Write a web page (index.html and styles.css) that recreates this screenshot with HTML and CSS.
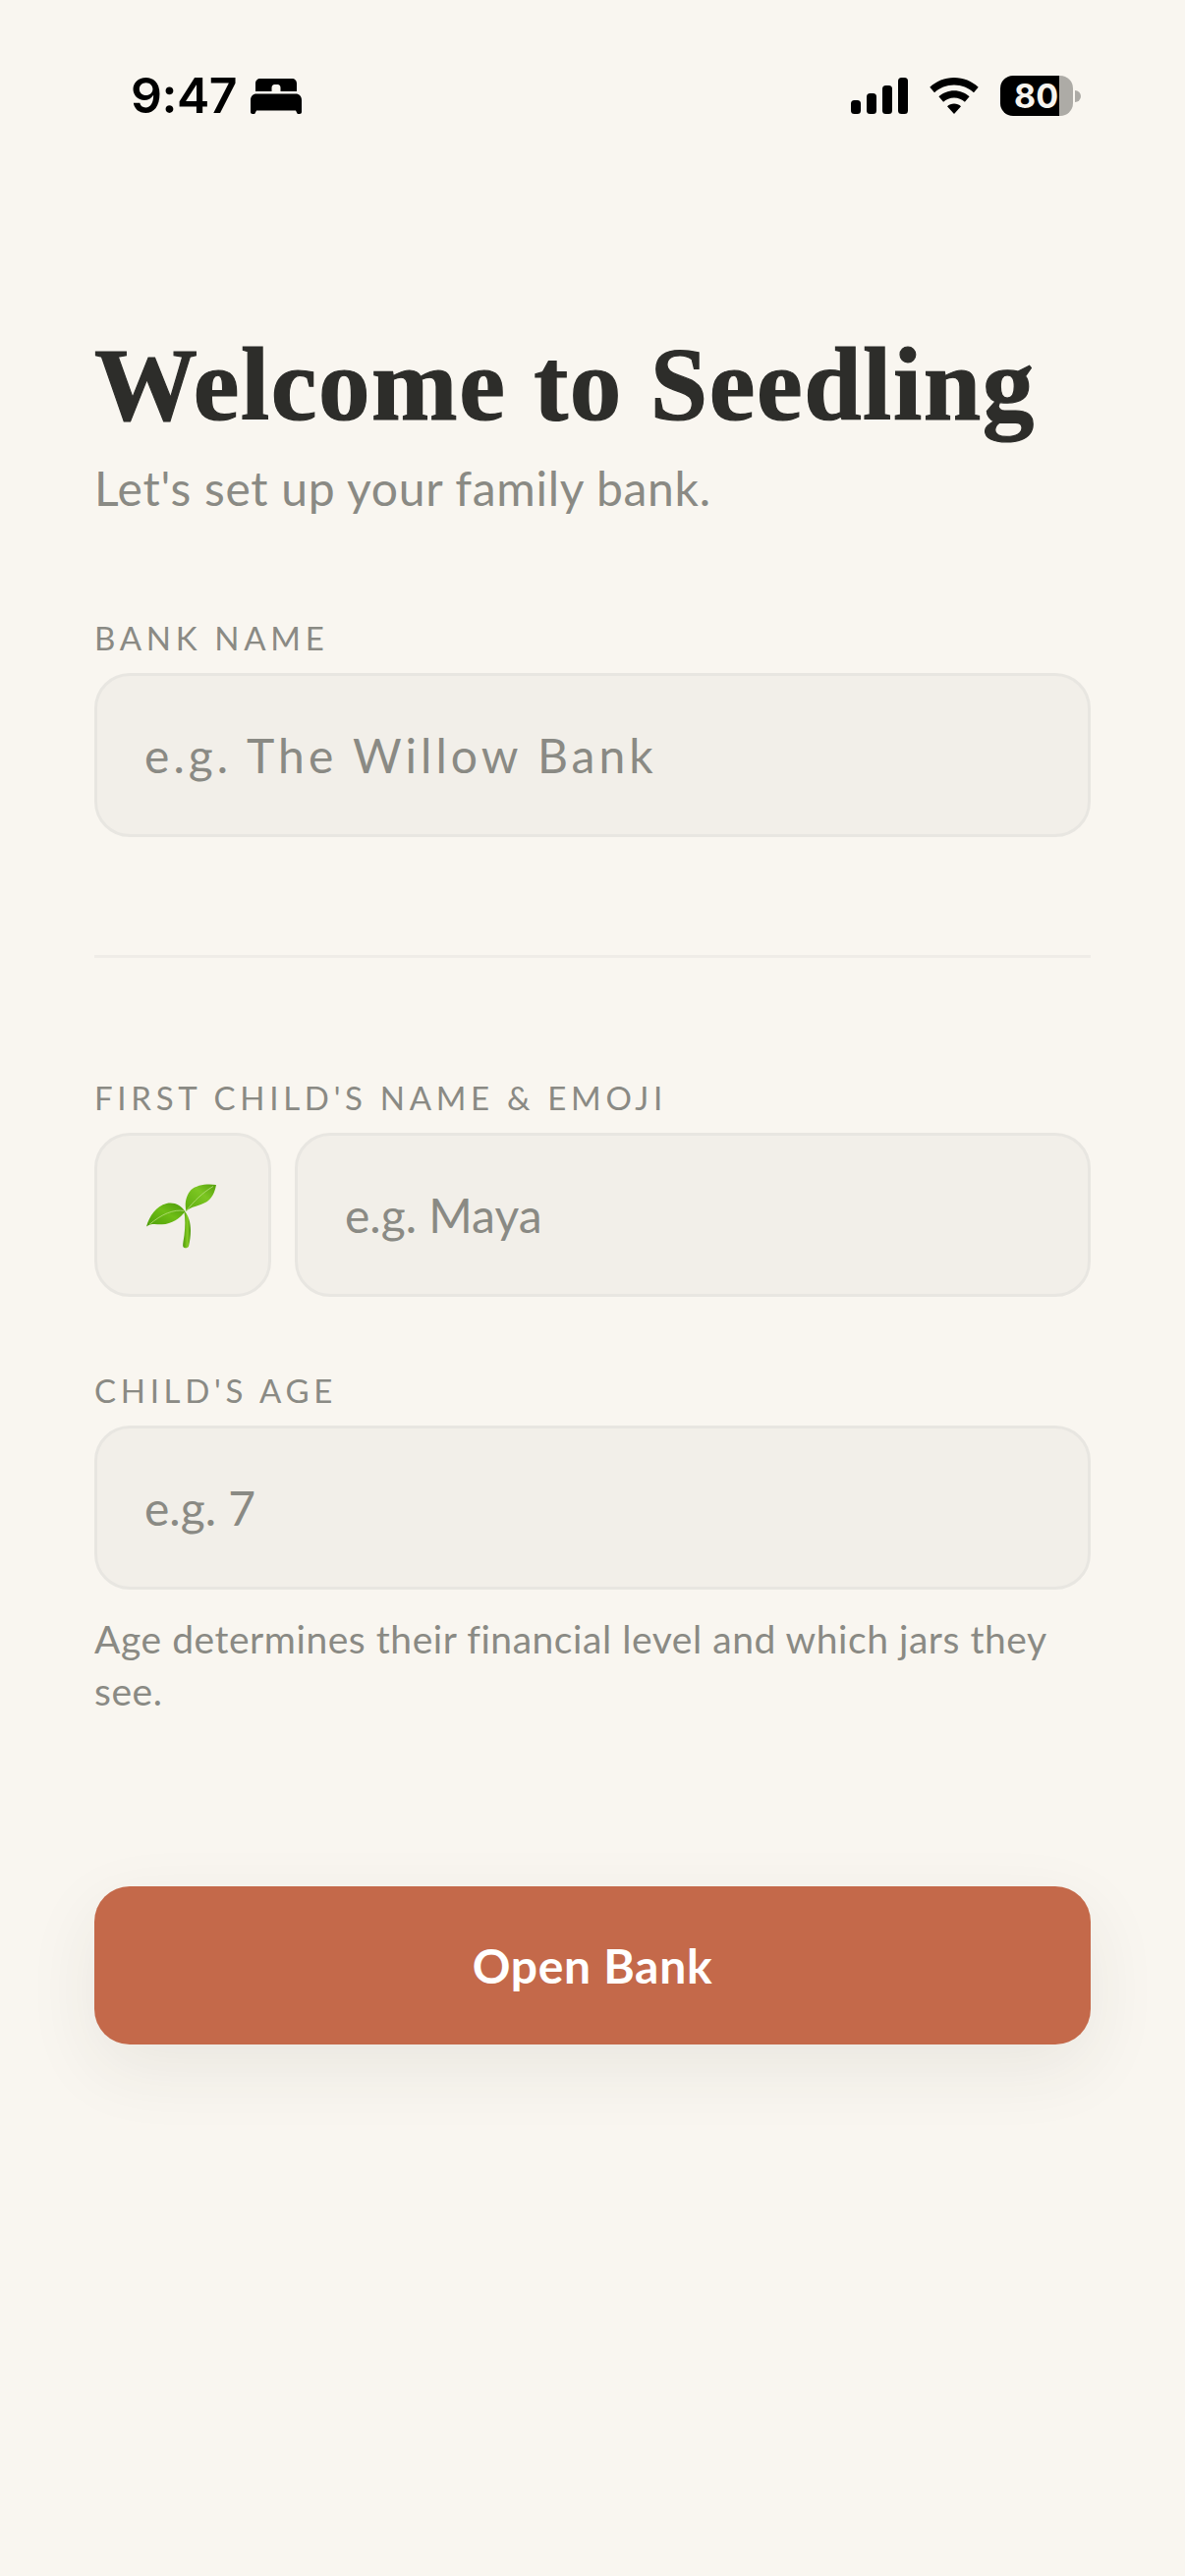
FILE: index.html
```html
<!DOCTYPE html>
<html lang="en">
<head>
<meta charset="utf-8">
<title>Seedling</title>
<link rel="stylesheet" href="styles.css">
</head>
<body>
<div class="screen">
  <header class="status">
    <div class="status-left">
      <span class="time">9:47</span>
      <svg class="bed" viewBox="0 0 52 36" width="52" height="36"><path d="M5 13V5C5 2 7 0 10 0h32c3 0 5 2 5 5v8H30.500V9.500c0-2-1-3.500-3-3.500h-3c-2 0-3 1.500-3 3.500V13z"/><path d="M6 15.500h40c3.500 0 6 2.500 6 6.500v12c0 1.200-.8 2-2 2h-1c-1 0-1.700-.6-2-1.600L46 32.500H6l-1 1.900c-.3 1-1 1.600-2 1.600H2c-1.200 0-2-.8-2-2V22c0-4 2.500-6.500 6-6.500z"/></svg>
    </div>
    <div class="status-right">
      <svg class="signal" viewBox="0 0 58 37" width="58" height="37"><rect x="0" y="23" width="10" height="14" rx="3.500"/><rect x="16" y="16" width="10" height="21" rx="3.500"/><rect x="32" y="8" width="10" height="29" rx="3.500"/><rect x="48" y="0" width="10" height="37" rx="3.500"/></svg>
      <svg class="wifi" viewBox="0 0 50 37" width="50" height="37"><path d="M25 0c9.500 0 18.200 3.700 24.700 9.700L45 15.200C39.800 10.400 32.800 7.400 25 7.400S10.200 10.400 5 15.200L.3 9.700C6.800 3.700 15.500 0 25 0z"/><path d="M25 13.200c6 0 11.500 2.300 15.600 6.100l-4.700 5.400c-2.800-2.600-6.700-4.300-10.900-4.300s-8.100 1.700-10.900 4.300l-4.700-5.400c4.100-3.800 9.600-6.100 15.600-6.100z"/><path d="M25 26.500c2.700 0 5.100 1 7 2.700L25 37l-7-7.800c1.900-1.700 4.300-2.700 7-2.700z"/></svg>
      <div class="battery">
        <div class="battery-body"><span class="battery-level">80</span></div>
        <span class="battery-cap"></span>
      </div>
    </div>
  </header>

  <main class="content">
    <h1 class="title">Welcome to Seedling</h1>
    <p class="subtitle">Let's set up your family bank.</p>

    <section class="field bank-field">
      <label class="label">BANK NAME</label>
      <div class="input input-wide">e.g. The Willow Bank</div>
    </section>

    <hr class="divider">

    <section class="field">
      <label class="label">FIRST CHILD'S NAME &amp; EMOJI</label>
      <div class="row">
        <div class="input emoji-box">
          <svg class="sprout" viewBox="0 0 72 66" width="72" height="66">
            <defs>
              <linearGradient id="leafA" x1="0" y1="1" x2="1" y2="0"><stop offset="0" stop-color="#4c9c08"/><stop offset=".55" stop-color="#6fbe16"/><stop offset="1" stop-color="#4a980a"/></linearGradient>
              <linearGradient id="leafB" x1="0" y1="1" x2="1" y2="0"><stop offset="0" stop-color="#5dac0e"/><stop offset=".6" stop-color="#7cc622"/><stop offset="1" stop-color="#559f0c"/></linearGradient>
              <linearGradient id="stem" x1="0" y1="0" x2="1" y2="0"><stop offset="0" stop-color="#4c9a0a"/><stop offset=".6" stop-color="#86cc24"/><stop offset="1" stop-color="#4a960a"/></linearGradient>
            </defs>
            <path fill="url(#leafA)" d="M0 43.500C3 33 10 22.500 20.500 20c8-1.800 14.500 2 19 8C34.500 35 25.500 41 16 41.300 10 41.500 5.500 39.500 0 43.500z"/>
            <path fill="url(#leafB)" d="M71 1c-1.500 8-4 13.500-10 17.500C54 22.500 45 23 40.500 28c-1.800-7-.5-16 5-22C51 1 62 -.5 71 1z"/>
            <path fill="none" stroke="#b8e07c" stroke-width=".8" d="M41 27C48 18 57 9 68 2.500M38.500 27.500C28 25.500 15 31 3 41.500"/>
            <path fill="url(#stem)" d="M38.500 27.500c4.500 4.500 6.500 12 6.500 20 0 5.500-.8 11-2 16-.6 2.400-5.500 2.600-5.800-.2-.2-2 .6-6 1.300-11 1-8 1.200-17-.2-24.800z"/>
          </svg>
        </div>
        <div class="input input-grow">e.g. Maya</div>
      </div>
    </section>

    <section class="field age-field">
      <label class="label">CHILD'S AGE</label>
      <div class="input">e.g. 7</div>
      <p class="hint">Age determines their financial level and which jars they see.</p>
    </section>

    <button class="cta">Open Bank</button>
  </main>
</div>
</body>
</html>
```

FILE: styles.css
```css
* { box-sizing: border-box; }
html, body { margin: 0; padding: 0; }
body {
  background: #f9f6f0;
  font-family: Lato, "Noto Sans", sans-serif;
  color: #2d2d2a;
}
.screen { width: 1206px; height: 2622px; overflow: hidden; }

.status {
  display: flex;
  justify-content: space-between;
  align-items: center;
  height: 37px;
  margin-top: 79px;
  padding: 0 106px 0 133px;
  color: #000;
}
.status-left { display: flex; align-items: center; gap: 14px; }
.time {
  font-family: Inter, sans-serif;
  font-weight: 600;
  font-size: 50px;
  line-height: 37px;
  letter-spacing: -.5px;
}
.bed { display: block; }
.status-right { display: flex; align-items: center; }
.signal { display: block; margin-right: 22px; }
.wifi { display: block; margin-right: 22px; }
.battery { display: flex; align-items: center; }
.battery-body {
  width: 74px;
  height: 41px;
  border-radius: 13px;
  background: linear-gradient(to right, #000 0, #000 60px, #adaba6 60px);
  display: flex;
  align-items: center;
  padding-left: 14px;
}
.battery-level {
  font-family: Inter, sans-serif;
  font-weight: 700;
  font-size: 34px;
  line-height: 41px;
  color: #f7f4ee;
}
.battery-cap {
  width: 6px;
  height: 12px;
  margin-left: 2px;
  background: #adaba6;
  border-radius: 0 7px 7px 0;
}

.content {
  display: flex;
  flex-direction: column;
  padding: 224px 96px 0;
}
.title {
  margin: 0;
  font-family: "Liberation Serif", serif;
  font-weight: 700;
  font-size: 105px;
  line-height: 104px;
  letter-spacing: 1.600px;
  white-space: nowrap;
  -webkit-text-stroke: 1.200px #2d2d2a;
  color: #2d2d2a;
}
.subtitle {
  margin: 22px 0 0;
  font-size: 48px;
  line-height: 62px;
  letter-spacing: .7px;
  color: #8a8a84;
}
.field { display: flex; flex-direction: column; }
.bank-field { margin-top: 99px; }
.label {
  font-size: 33px;
  line-height: 44px;
  letter-spacing: 4.700px;
  color: #8a8a84;
  margin-bottom: 14px;
}
.input {
  height: 167px;
  border: 3px solid #e8e6e1;
  border-radius: 36px;
  background: #f2efe9;
  display: flex;
  align-items: center;
  padding: 0 48px;
  font-size: 48px;
  color: #8a8a84;
}
.input-wide { letter-spacing: 4.050px; }
.divider {
  border: 0;
  height: 3px;
  margin: 120px 0 120px;
  background: #efece7;
}
.row { display: flex; gap: 24px; }
.emoji-box { width: 180px; flex: none; justify-content: center; padding: 3px 3px 0 0; }
.sprout { display: block; }
.input-grow { flex: 1; }
.age-field { margin-top: 73px; }
.hint {
  margin: 24px 0 0;
  font-size: 39px;
  line-height: 53px;
  letter-spacing: .55px;
  color: #8a8a84;
}
.cta {
  margin-top: 172px;
  height: 161px;
  border: 0;
  border-radius: 36px;
  background: #c4694a;
  color: #fff;
  font-family: Lato, sans-serif;
  font-weight: 700;
  font-size: 48px;
  letter-spacing: .7px;
  box-shadow: 0 24px 72px rgba(45, 45, 42, .08);
}
```
